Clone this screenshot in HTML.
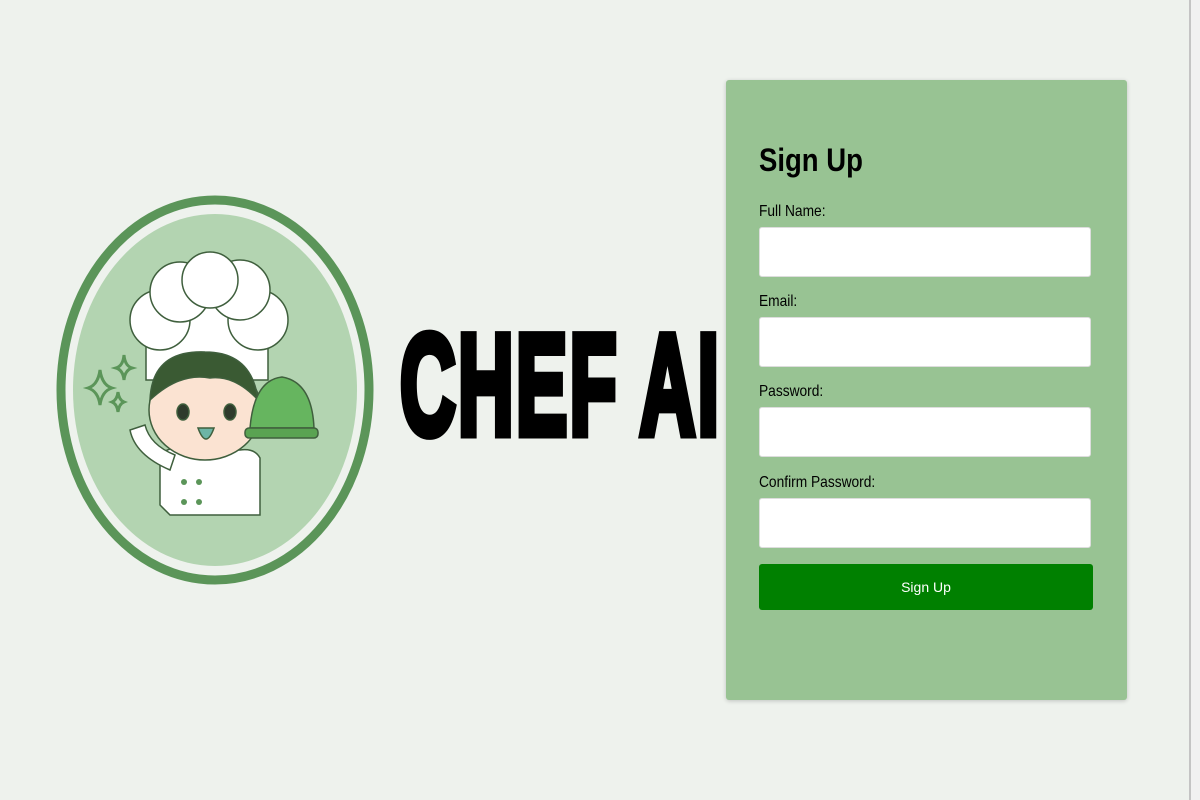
<!DOCTYPE html>
<html><head><meta charset="utf-8"><style>
html,body{margin:0;padding:0}
body{width:1200px;height:800px;background:#eef2ed;position:relative;overflow:hidden;font-family:"Liberation Sans",Arial,sans-serif}
.sb{position:absolute;left:1189px;top:0;width:11px;height:800px;background:#f1f1f1;border-left:2px solid #c4c4c4}
.title{position:absolute;left:400px;top:306px;font-size:143px;font-weight:bold;line-height:160px;color:#000;-webkit-text-stroke:9px #000;transform:scaleX(0.54);transform-origin:0 0;white-space:nowrap;letter-spacing:4px}
.card{position:absolute;left:726px;top:80px;width:401px;height:620px;background:#98c393;border-radius:3px;box-shadow:0 1px 4px rgba(0,0,0,.2)}
h1{position:absolute;left:33px;top:62px;margin:0;font-size:32px;font-weight:bold;transform:scaleX(0.86);transform-origin:0 0}
label{position:absolute;left:33px;font-size:16px;color:#000;transform:scaleX(0.86);transform-origin:0 0;white-space:nowrap}
.in{position:absolute;left:33px;width:330px;height:48px;background:#fff;border:1px solid #ddd;border-radius:3px}
.btn{position:absolute;left:33px;top:484px;width:334px;height:46px;background:#008000;border-radius:3px;color:#fff;font-size:14px;text-align:center;line-height:46px}
</style></head><body>
<svg style="position:absolute;left:0;top:0" width="400" height="800">
<ellipse cx="215" cy="390" rx="154" ry="190" fill="#eef2ed" stroke="#5b9559" stroke-width="9"/>
<ellipse cx="215" cy="390" rx="142" ry="176" fill="#b3d4b1"/>
<g stroke="#3f5f3d" stroke-width="1.5">
<rect x="146" y="300" width="122" height="80" fill="#fff"/>
<circle cx="160" cy="320" r="30" fill="#fff"/>
<circle cx="258" cy="320" r="30" fill="#fff"/>
<circle cx="180" cy="292" r="30" fill="#fff"/>
<circle cx="240" cy="290" r="30" fill="#fff"/>
<circle cx="210" cy="280" r="28" fill="#fff"/>
<path d="M160 505 L160 455 Q170 445 185 450 L240 450 Q255 448 260 458 L260 515 L170 515 Z" fill="#fff"/>
<path d="M130 430 Q135 455 170 470 L175 455 Q150 445 145 425Z" fill="#fff"/>
<ellipse cx="205" cy="410" rx="56" ry="50" fill="#fbe3d2"/>
<path d="M150 400 Q152 350 205 352 Q252 352 258 400 Q235 375 210 378 Q180 372 150 400Z" fill="#3a5a33"/>
<ellipse cx="183" cy="412" rx="6" ry="8" fill="#2e3b2c"/>
<ellipse cx="230" cy="412" rx="6" ry="8" fill="#2e3b2c"/>
<path d="M198 428 Q206 450 214 428Z" fill="#6db5a6"/>
<path d="M250 428 Q254 380 282 377 Q312 382 314 428Z" fill="#66b55f"/>
<rect x="245" y="428" width="73" height="10" rx="4" fill="#5aa352"/>
</g>
<g fill="#5b9559"><circle cx="184" cy="482" r="3"/><circle cx="199" cy="482" r="3"/><circle cx="184" cy="502" r="3"/><circle cx="199" cy="502" r="3"/></g>
<g fill="none" stroke="#5b9559" stroke-width="3"><path d="M100 370 Q102 385 112 388 Q102 391 100 405 Q98 391 88 388 Q98 385 100 370Z"/><path d="M124 355 Q125 366 132 368 Q125 370 124 380 Q123 370 116 368 Q123 366 124 355Z"/><path d="M118 392 Q119 400 124 402 Q119 404 118 412 Q117 404 112 402 Q117 400 118 392Z"/></g>
</svg>
<div class="title">CHEF AI</div>
<div class="card">
<h1>Sign Up</h1>
<label style="top:123px">Full Name:</label><div class="in" style="top:147px"></div>
<label style="top:213px">Email:</label><div class="in" style="top:237px"></div>
<label style="top:303px">Password:</label><div class="in" style="top:327px"></div>
<label style="top:394px">Confirm Password:</label><div class="in" style="top:418px"></div>
<div class="btn">Sign Up</div>
</div>
<div class="sb"></div>
</body></html>
